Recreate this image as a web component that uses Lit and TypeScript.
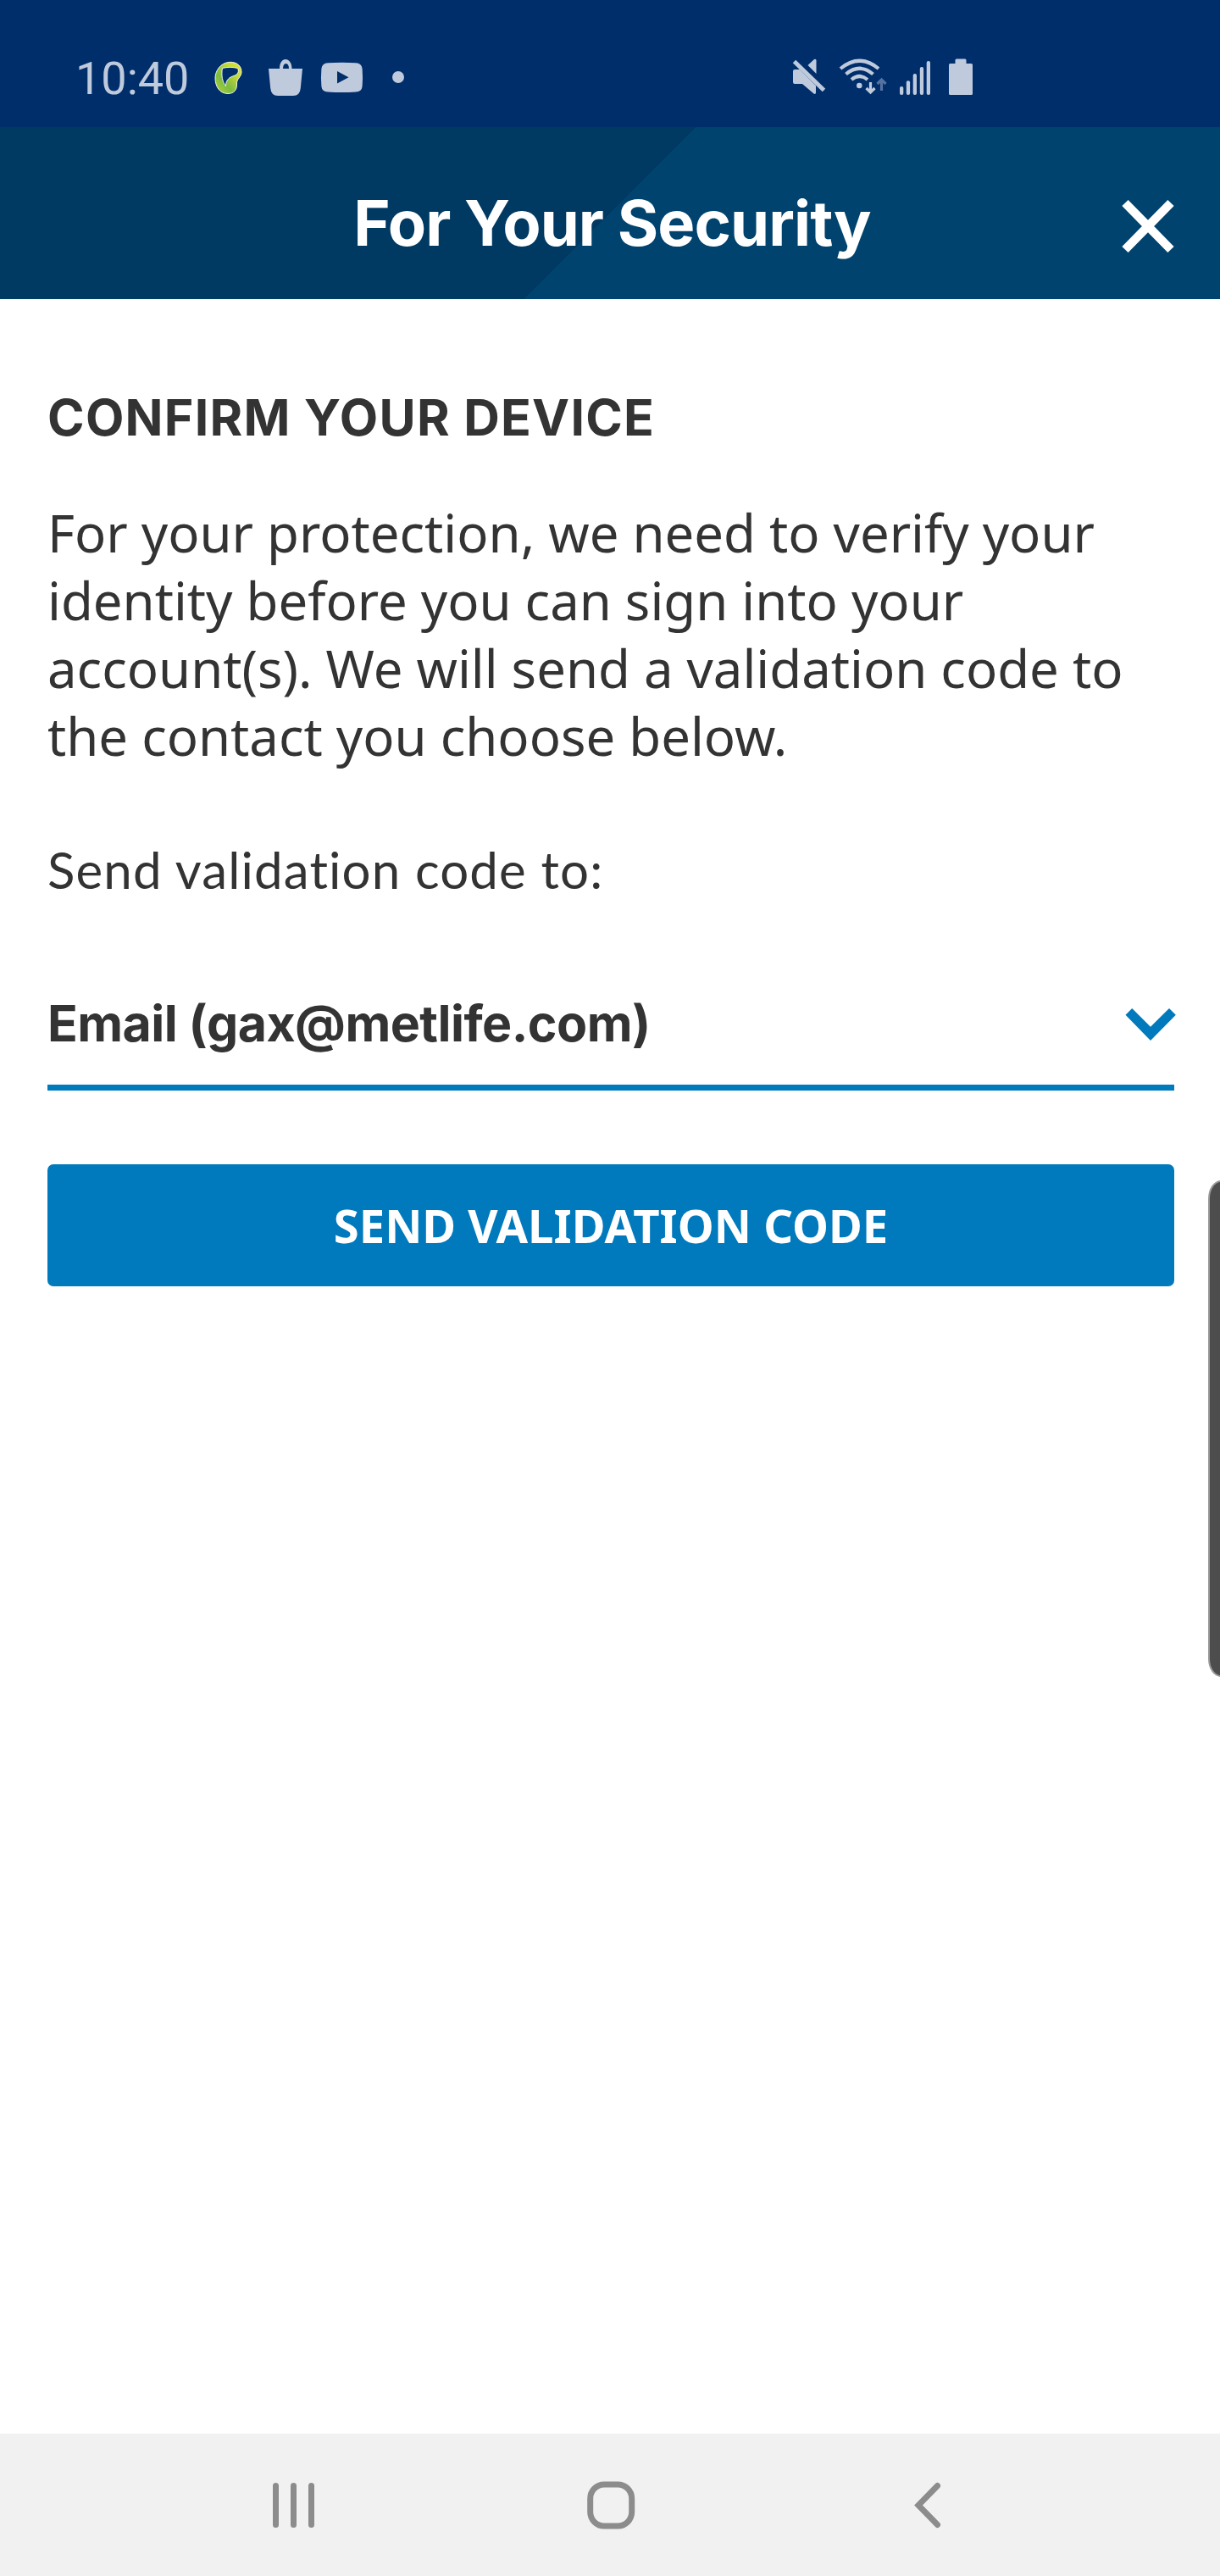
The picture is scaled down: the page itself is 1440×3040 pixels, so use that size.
import { LitElement, html, css } from "lit";
import { customElement, property } from "lit/decorators.js";

@customElement("status-bar")
class StatusBar extends LitElement {
  static styles = css`
    :host { display: block; }
    .bar {
      box-sizing: border-box;
      height: 150px;
      padding: 62px 291px 0 89px;
      display: flex;
      justify-content: space-between;
      align-items: flex-start;
      background: #002e6b;
      color: #bfcadc;
    }
    .group { display: flex; align-items: flex-start; }
    .time {
      width: 158px;
      font: 400 54px/61px Roboto, sans-serif;
      white-space: nowrap;
    }
    svg { display: block; fill: currentColor; }
  `;
  render() {
    return html`
      <div class="bar">
        <div class="group">
          <div class="time">10:40</div>
          <svg width="240" height="60" viewBox="247 62 240 60">
            <defs>
              <linearGradient id="leaf" x1="0" y1="1" x2="1" y2="0">
                <stop offset="0" stop-color="#b5d83a" />
                <stop offset=".35" stop-color="#7dbb42" />
                <stop offset=".7" stop-color="#c3da36" />
                <stop offset="1" stop-color="#e3e63a" />
              </linearGradient>
            </defs>
            <path fill="url(#leaf)" stroke="#fff" stroke-width=".9" fill-rule="evenodd"
              d="M271 73.300C280 73 285 78 285 85C285 91 279 93 279.500 99C280 106 276 110.500 269 110.500C259 110.500 254 102 254 92C254 84 260 74 271 73.300ZM262.500 80.500C261 89 262.500 97 266.500 101.500C266.500 94 271 91 276 89.500C281 88 282.500 84 280.500 80.500C275 79 268 79 262.500 80.500Z" />
            <path fill-rule="evenodd"
              d="M317 81H330C330 74 333 70 337 70S344.500 74 344.500 81H357L354.800 104Q354 113 346 113H328Q320 113 319.200 104ZM334 81H341C341 77 339.500 75 337.500 75S334 77 334 81Z" />
            <path fill-rule="evenodd"
              d="M387 74.300Q403.500 73.300 420 74.300Q427 74.800 427.600 81Q428.500 91.500 427.600 102Q427 108 420 108.500Q403.500 109.500 387 108.500Q380 108 379.400 102Q378.500 91.500 379.400 81Q380 74.800 387 74.300ZM398 84V98.500L411.500 91.300Z" />
            <circle cx="470" cy="91" r="7" />
          </svg>
        </div>
        <div class="group">
          <svg width="215" height="60" viewBox="934 62 215 60">
            <path d="M938 82H944L963 101V109Q963 112 960.500 110.600L947 99H938Q936 99 936 97V84Q936 82 938 82Z" />
            <path d="M953.500 77L961 70Q963.500 69 963.500 71.500V87Z" />
            <path d="M937.500 72.500L972.500 106.500" stroke="currentColor" stroke-width="5" />
            <g fill="none" stroke="currentColor" stroke-width="4.200">
              <path d="M992 81Q1014.500 62.500 1037 81" />
              <path d="M998.500 87.500Q1014.500 74 1030.500 87.500" />
              <path d="M1005 94Q1014.500 86 1024 94" />
            </g>
            <circle cx="1014.300" cy="101" r="3.300" />
            <path d="M1027.500 97V109M1022.500 104L1027.500 109L1032.500 104" fill="none" stroke="currentColor" stroke-width="3.200" />
            <path d="M1040.500 107V94M1035.500 99L1040.500 94L1045.500 99" fill="none" stroke="#5672a0" stroke-width="3.200" />
            <rect x="1062" y="102" width="4.300" height="10" rx="2" />
            <rect x="1069.800" y="95.300" width="4.300" height="16.700" rx="2" />
            <rect x="1077.700" y="87" width="4.300" height="25" rx="2" />
            <rect x="1085.800" y="79" width="4.300" height="33" rx="2" />
            <rect x="1093.700" y="72" width="4.300" height="40" rx="2" />
            <path d="M1127.500 71Q1127.500 69.500 1129 69.500H1139Q1140.500 69.500 1140.500 71V75H1146.500Q1148 75 1148 76.500V110.500Q1148 112 1146.500 112H1121.500Q1120 112 1120 110.500V76.500Q1120 75 1121.500 75H1127.500Z" />
          </svg>
        </div>
      </div>
    `;
  }
}

@customElement("title-bar")
class TitleBar extends LitElement {
  @property() heading = "";
  static styles = css`
    :host { display: block; }
    .bar {
      box-sizing: border-box;
      height: 203px;
      padding: 0 53px 0 60px;
      display: grid;
      grid-template-columns: 64px 1fr 64px;
      background: linear-gradient(135deg, #003a62 0 581px, #00436e 581px);
    }
    .title {
      grid-column: 2;
      margin: 63px 2px 0 0;
      font: 700 74px/100px Inter, sans-serif;
      letter-spacing: -0.900px;
      text-align: center;
      white-space: nowrap;
      color: #fff;
    }
    .close { margin-top: 85px; justify-self: end; display: block; }
  `;
  render() {
    return html`
      <header class="bar">
        <h1 class="title">${this.heading}</h1>
        <svg class="close" width="64" height="64" viewBox="0 0 64 64">
          <path d="M5 4.500L59 59.500M59 4.500L5 59.500" stroke="#fff" stroke-width="10.200" />
        </svg>
      </header>
    `;
  }
}

@customElement("nav-bar")
class NavBar extends LitElement {
  static styles = css`
    :host { display: block; }
    .bar {
      box-sizing: border-box;
      height: 168px;
      padding: 54px 325px 0 317px;
      display: flex;
      justify-content: space-between;
      background: #f1f1f1;
    }
    svg { display: block; fill: none; stroke: #8c8c8c; stroke-width: 7; }
  `;
  render() {
    return html`
      <nav class="bar">
        <svg width="60" height="62" viewBox="317 2926 60 62" stroke-linecap="round">
          <path d="M325.500 2933.500V2979.500M346.500 2933.500V2979.500M367.500 2933.500V2979.500" />
        </svg>
        <svg width="60" height="62" viewBox="690.500 2926 60 62">
          <rect x="696.200" y="2932" width="49" height="49" rx="16.500" />
        </svg>
        <svg width="51" height="62" viewBox="1064 2926 51 62" stroke-linecap="round">
          <path d="M1106.500 2933.500L1084 2956.500L1106.500 2979.500" />
        </svg>
      </nav>
    `;
  }
}

@customElement("app-root")
class AppRoot extends LitElement {
  static styles = css`
    :host { display: block; }
    .screen {
      position: relative;
      width: 1440px;
      height: 3040px;
      display: flex;
      flex-direction: column;
      overflow: hidden;
      background: #fff;
      color: #333;
    }
    .content {
      flex: 1;
      padding: 100px 54px 0 56px;
      display: flex;
      flex-direction: column;
    }
    .heading {
      margin: 0;
      font: 700 59px/80px Inter, sans-serif;
      letter-spacing: 1.250px;
      white-space: nowrap;
    }
    .intro {
      margin: 55px 0 0;
      font: 400 61.650px/80px "Noto Sans", sans-serif;
      white-space: nowrap;
    }
    .label {
      margin: 78px 0 0;
      font: 400 60px/80px Lato, sans-serif;
      letter-spacing: 1.150px;
      white-space: nowrap;
    }
    .select {
      margin-top: 102px;
      padding-bottom: 32px;
      border-bottom: 7px solid #007abc;
      display: flex;
      justify-content: space-between;
      font: 700 59px/80px Inter, sans-serif;
      letter-spacing: -0.550px;
      white-space: nowrap;
    }
    .chevron { display: block; margin: 20px -3px 0 0; fill: #007abc; }
    .submit {
      margin-top: 87px;
      padding: 0;
      height: 144px;
      border: 0;
      border-radius: 7px;
      background: #007abc;
      color: #fff;
      font: 700 54.400px/144px "Noto Sans", sans-serif;
    }
    .edge {
      position: absolute;
      box-sizing: border-box;
      top: 1393px;
      left: 1426px;
      width: 30px;
      height: 586px;
      border: 2px solid #9a9a9a;
      border-radius: 16px / 23px;
      background: #4d4d4d;
    }
  `;
  render() {
    return html`
      <div class="screen">
        <status-bar></status-bar>
        <title-bar heading="For Your Security"></title-bar>
        <main class="content">
          <h2 class="heading">CONFIRM YOUR DEVICE</h2>
          <p class="intro">
            For your protection, we need to verify your<br />identity before you can sign into your<br />account(s).
            We will send a validation code to<br />the contact you choose below.
          </p>
          <p class="label">Send validation code to:</p>
          <div class="select">
            <span>Email (gax@metlife.com)</span>
            <svg class="chevron" width="61" height="42" viewBox="1328 1188 61 42">
              <path d="M1336.200 1190L1358 1211.800L1380 1190L1387.800 1197.800L1358 1228L1328.500 1197.800Z" />
            </svg>
          </div>
          <button class="submit">SEND VALIDATION CODE</button>
        </main>
        <nav-bar></nav-bar>
        <div class="edge"></div>
      </div>
    `;
  }
}
